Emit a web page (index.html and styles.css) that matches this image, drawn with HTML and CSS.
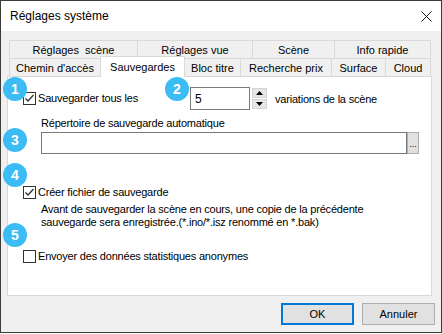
FILE: index.html
```html
<!DOCTYPE html>
<html lang="fr">
<head>
    <meta charset="UTF-8">
    <title>Réglages système</title>
    <link rel="stylesheet" href="styles.css">
</head>
<body>
    <div class="window">
        <div class="titlebar">
            <span class="title">Réglages système</span>
            <svg class="close" width="11" height="11" viewBox="0 0 11 11"><path d="M0.5 0.5L10.5 10.5M10.5 0.5L0.5 10.5" stroke="#111" stroke-width="1" fill="none"/></svg>
        </div>

        <div class="body">
            <div class="tabs">
                <div class="tab-row">
                    <div class="tab t-scene">Réglages&nbsp; scène</div>
                    <div class="tab t-vue">Réglages vue</div>
                    <div class="tab t-scene2">Scène</div>
                    <div class="tab t-info">Info rapide</div>
                </div>
                <div class="tab-row">
                    <div class="tab t-chemin">Chemin d'accès</div>
                    <div class="tab t-sauv selected">Sauvegardes</div>
                    <div class="tab t-bloc no-left">Bloc titre</div>
                    <div class="tab t-prix">Recherche prix</div>
                    <div class="tab t-surface">Surface</div>
                    <div class="tab t-cloud">Cloud</div>
                </div>
            </div><!--tabs-->

            <div class="panel">
                <div class="row">
                    <label class="check first">
                        <span class="box"><svg width="11" height="11" viewBox="0 0 11 11"><polyline points="1.5,5.5 4,8 9.5,2" fill="none" stroke="#333" stroke-width="1.3"/></svg></span>
                        Sauvegarder tous les
                    </label>
                    <div class="num">5</div>
                    <div class="spin">
                        <div class="spin-btn"><svg width="7" height="4" viewBox="0 0 7 4"><path d="M3.5 0L7 4H0z" fill="#000"/></svg></div>
                        <div class="spin-btn"><svg width="7" height="4" viewBox="0 0 7 4"><path d="M0 0H7L3.5 4z" fill="#000"/></svg></div>
                    </div>
                    <span class="var-text">variations de la scène</span>
                </div>

                <div class="dir-label">Répertoire de sauvegarde automatique</div>
                <div class="path-row">
                    <div class="path-input"></div>
                    <div class="browse">...</div>
                </div>

                <label class="check row4">
                    <span class="box"><svg width="11" height="11" viewBox="0 0 11 11"><polyline points="1.5,5.5 4,8 9.5,2" fill="none" stroke="#333" stroke-width="1.3"/></svg></span>
                    Créer fichier de sauvegarde
                </label>
                <p class="desc">Avant de sauvegarder la scène en cours, une copie de la précédente<br>sauvegarde sera enregistrée.(*.ino/*.isz renommé en *.bak)</p>

                <label class="check row5">
                    <span class="box"></span>
                    Envoyer des données statistiques anonymes
                </label>
            </div><!--panel-->

            <div class="buttons">
                <button class="btn default">OK</button>
                <button class="btn">Annuler</button>
            </div>
        </div><!--body-->

        <span class="badge b1">1</span>
        <span class="badge b2">2</span>
        <span class="badge b3">3</span>
        <span class="badge b4">4</span>
        <span class="badge b5">5</span>
    </div><!--window-->
</body>
</html>
```

FILE: styles.css
```css
*{
    box-sizing: border-box;
}

body{
    margin: 0;
    background: #fff;
    font-family: "Liberation Sans", Arial, sans-serif;
    font-size: 11px;
    color: #000;
}

.window{
    position: relative;
    width: 442px;
    height: 333px;
    border: 1px solid #3c3c3c;
    background: #f0f0f0;
}

.titlebar{
    height: 30px;
    background: #fff;
    display: flex;
    align-items: center;
    justify-content: space-between;
    padding: 0 9px;
    font-size: 12px;
}

.close{
    display: block;
}

.body{
    padding: 9px 9px 0 6px;
}

/* onglets */
.tabs{
    margin-left: 2px;
    width: 422px;
}

.tab-row{
    display: flex;
    height: 18px;
}

.tab{
    height: 18px;
    border-top: 1px solid #d9d9d9;
    border-left: 1px solid #d9d9d9;
    display: flex;
    align-items: center;
    justify-content: center;
    white-space: nowrap;
    padding-top: 1px;
}

.tab:last-child{
    border-right: 1px solid #d9d9d9;
}

.tab.no-left{
    border-left: none;
}

.tab.selected{
    position: relative;
    z-index: 1;
    height: 21px;
    margin-top: -2px;
    background: #fff;
    border-right: 1px solid #d9d9d9;
    padding-top: 0;
    padding-bottom: 1px;
}

.t-scene{ width: 128px; }
.t-vue{ width: 115px; }
.t-scene2{ width: 82px; }
.t-info{ width: 97px; }
.t-chemin{ width: 91px; }
.t-sauv{ width: 85px; }
.t-bloc{ width: 55px; }
.t-prix{ width: 91px; }
.t-surface{ width: 54px; }
.t-cloud{ width: 46px; }

/* panneau */
.panel{
    width: 425px;
    height: 220px;
    border: 1px solid #d9d9d9;
    background: #fff;
    padding: 10px 0 0 15px;
    letter-spacing: -0.2px;
}

.row{
    display: flex;
    align-items: center;
    height: 23px;
}

.check{
    display: flex;
    align-items: center;
    gap: 2px;
    line-height: 13px;
}

.check.first{
    width: 167px;
}

.box{
    width: 13px;
    height: 13px;
    border: 1px solid #333;
    background: #fff;
    display: flex;
    align-items: center;
    justify-content: center;
}

.box svg{
    display: block;
}

.num{
    width: 60px;
    height: 23px;
    border: 1px solid #7a7a7a;
    padding-left: 4px;
    display: flex;
    align-items: center;
    font-size: 12px;
}

.spin{
    display: flex;
    flex-direction: column;
    gap: 1px;
    width: 15px;
    height: 21px;
    margin-left: 2px;
}

.spin-btn{
    flex: 1;
    background: #e6e6e6;
    border: 1px solid #d4d4d4;
    display: flex;
    align-items: center;
    justify-content: center;
}

.var-text{
    margin-left: 8px;
}

.dir-label{
    margin: 7px 0 0 18px;
    line-height: 13px;
}

.path-row{
    display: flex;
    margin: 2px 0 0 18px;
}

.path-input{
    width: 366px;
    height: 22px;
    border: 1px solid #7a7a7a;
}

.browse{
    width: 12px;
    height: 22px;
    border: 1px solid #adadad;
    background: #e1e1e1;
    font-size: 9px;
    letter-spacing: 0;
    display: flex;
    align-items: flex-end;
    justify-content: center;
    padding-bottom: 4px;
}

.row4{
    margin-top: 32px;
}

.desc{
    margin: 4px 0 0 18px;
    line-height: 13px;
}

.row5{
    margin-top: 21px;
}

/* boutons */
.buttons{
    display: flex;
    justify-content: flex-end;
    gap: 8px;
    margin: 7px -3px 0 0;
}

.btn{
    width: 73px;
    height: 22px;
    border: 1px solid #adadad;
    background: #e1e1e1;
    font-family: inherit;
    font-size: 11px;
    color: #000;
    padding: 0;
}

.btn.default{
    border: 2px solid #0078d7;
}

/* pastilles numérotées */
.badge{
    position: absolute;
    width: 24px;
    height: 24px;
    border-radius: 50%;
    background: #3bbcf4;
    color: #fff;
    font-weight: bold;
    font-size: 14px;
    display: flex;
    align-items: center;
    justify-content: center;
}

.b1{ left: 2px; top: 76px; }
.b2{ left: 164px; top: 76px; }
.b3{ left: 2px; top: 127px; }
.b4{ left: 2px; top: 162px; }
.b5{ left: 2px; top: 222px; }
```
